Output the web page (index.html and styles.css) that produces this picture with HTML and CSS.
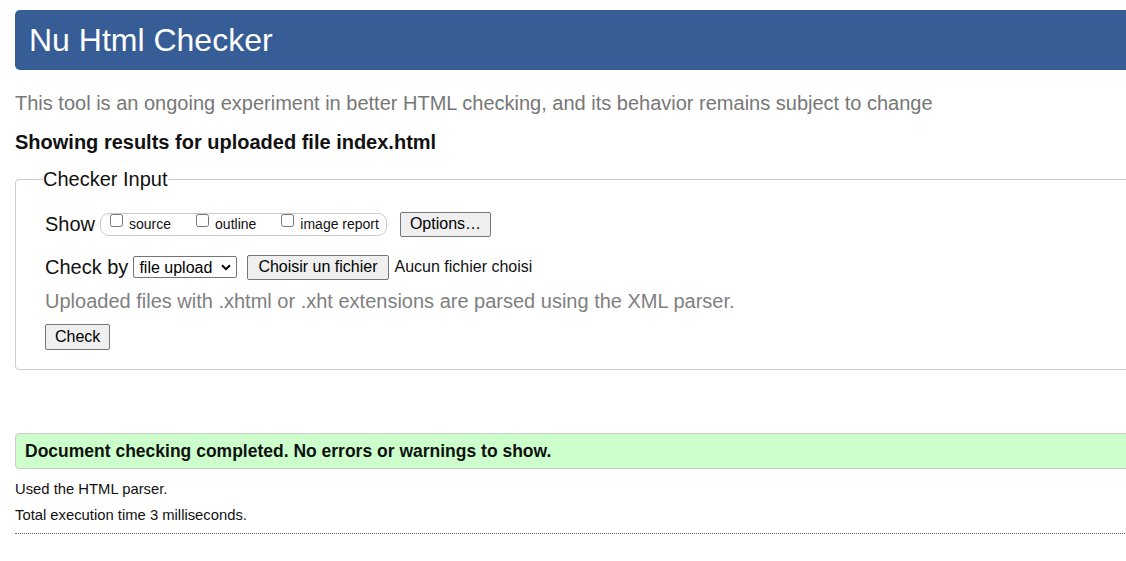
FILE: index.html
```html
<!DOCTYPE html>
<html lang="en">
<head>
<meta charset="utf-8">
<title>Nu Html Checker</title>
<link rel="stylesheet" href="styles.css">
</head>
<body>
<div class="page">
  <h1 class="banner">Nu Html Checker</h1>
  <p class="intro">This tool is an ongoing experiment in better HTML checking, and its behavior remains subject to change</p>
  <h2 class="results-for">Showing results for uploaded file index.html</h2>
  <fieldset class="input-box">
    <legend class="legend">Checker Input</legend>
    <div class="row show-row">
      <span class="row-label">Show</span>
      <span class="pill">
        <label class="opt"><input type="checkbox" class="cb">source</label>
        <label class="opt"><input type="checkbox" class="cb">outline</label>
        <label class="opt last"><input type="checkbox" class="cb">image report</label>
      </span>
      <button type="button" class="btn options">Options…</button>
    </div>
    <div class="row checkby-row">
      <span class="row-label">Check by</span>
      <span class="sel-wrap">
        <select class="sel"><option>file upload</option></select>
        <svg class="chev" width="10" height="7" viewBox="0 0 10 7"><path d="M1 1.2 L5 5.2 L9 1.2" fill="none" stroke="#000" stroke-width="2"/></svg>
      </span>
      <button type="button" class="btn choose">Choisir un fichier</button>
      <span class="nofile">Aucun fichier choisi</span>
    </div>
    <p class="note">Uploaded files with .xhtml or .xht extensions are parsed using the XML parser.</p>
    <button type="button" class="btn check">Check</button>
  </fieldset>
  <div class="success">Document checking completed. No errors or warnings to show.</div>
  <p class="meta first">Used the HTML parser.</p>
  <p class="meta second">Total execution time 3 milliseconds.</p>
  <hr class="dots">
</div>
</body>
</html>
```
FILE: styles.css
```css
html {
  overflow: hidden;
}
body {
  margin: 0;
  background: #fff;
  color: #111;
  font-family: "Liberation Sans", Arial, sans-serif;
  font-size: 20px;
}
.page {
  width: 1160px;
  padding: 10px 0 0 15px;
}
.banner {
  margin: 0;
  height: 60px;
  line-height: 60px;
  padding-left: 14px;
  background: #365d95;
  color: #fff;
  font-size: 32px;
  font-weight: normal;
  border-radius: 5px;
}
.intro {
  margin: 21px 0 0;
  line-height: 24px;
  color: #777;
}
.results-for {
  margin: 15px 0 0;
  font-size: 20px;
  line-height: 24px;
  font-weight: bold;
  color: #111;
}
.input-box {
  margin: 13px 0 0;
  padding: 0 0 19px 29px;
  border: 1px solid #ccc;
  border-radius: 4px;
  min-width: 0;
}
.legend {
  padding: 0;
  margin-left: -2px;
  line-height: 24px;
}
.row {
  display: flex;
  align-items: center;
  height: 28px;
}
.show-row {
  margin-top: 19px;
}
.checkby-row {
  margin-top: 15px;
}
.row-label {
  margin-right: 5px;
}
.pill {
  display: flex;
  align-items: center;
  height: 21px;
  border: 1px solid #ccc;
  border-radius: 9px;
  padding: 0 7px 0 6px;
  font-size: 14px;
}
.opt {
  display: flex;
  align-items: center;
  margin-right: 22px;
}
.opt.last {
  margin-right: 0;
}
.cb {
  width: 13px;
  height: 13px;
  margin: 0 6px 3px 3px;
  position: relative;
  top: -2px;
}
.btn {
  font-family: "Liberation Sans", Arial, sans-serif;
  font-size: 16px;
  height: 25px;
  padding: 0 9px;
  background: #efefef;
  color: #000;
  border: 1px solid #767676;
  border-radius: 2px;
}
.options {
  margin-left: 13px;
}
.sel-wrap {
  position: relative;
  display: inline-flex;
}
.sel {
  -webkit-appearance: none;
  appearance: none;
  font-family: "Liberation Sans", Arial, sans-serif;
  font-size: 16px;
  height: 22px;
  width: 104px;
  padding: 0 0 0 5px;
  margin: 0;
  color: #000;
  background: #fff;
  border: 1px solid #767676;
  border-radius: 2px;
}
.chev {
  position: absolute;
  right: 6px;
  top: 8px;
  pointer-events: none;
}
.choose {
  margin-left: 10px;
  padding: 0 10px;
}
.nofile {
  font-size: 16px;
  margin-left: 6px;
}
.note {
  margin: 8px 0 0;
  line-height: 24px;
  color: #808080;
}
.check {
  margin-top: 11px;
  height: 26px;
}
.success {
  margin-top: 63px;
  height: 34px;
  line-height: 34px;
  padding-left: 9px;
  background: #ccffcc;
  border: 1px solid #ccc;
  border-radius: 4px;
  font-size: 17.5px;
  font-weight: bold;
  color: #111;
}
.meta {
  margin: 0;
  font-size: 14.8px;
  line-height: 18px;
}
.meta.first {
  margin-top: 11px;
}
.meta.second {
  margin-top: 8px;
}
.dots {
  margin: 9px 0 0;
  border: 0;
  border-top: 1px dotted #666;
  height: 0;
}
```
